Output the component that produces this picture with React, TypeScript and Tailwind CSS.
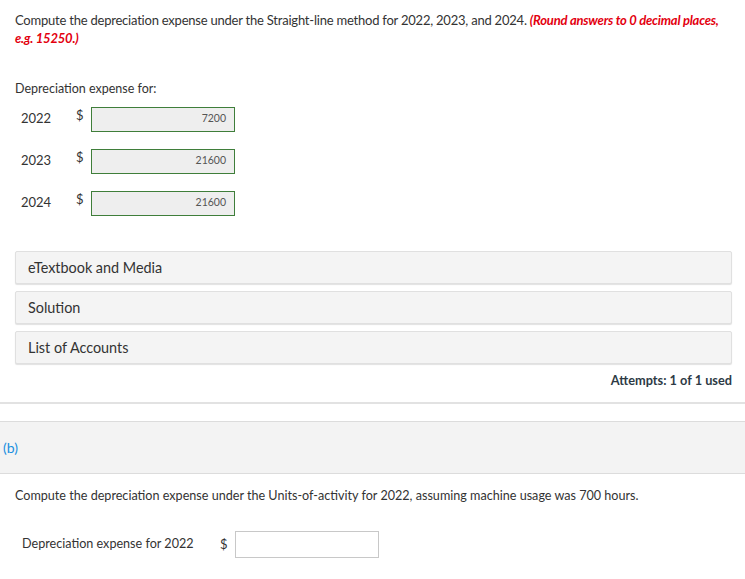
const rows = [
  { year: "2022", value: "7200" },
  { year: "2023", value: "21600" },
  { year: "2024", value: "21600" },
];

const panels = ["eTextbook and Media", "Solution", "List of Accounts"];

export default function App() {
  return (
    <div className="min-h-screen w-[745px] bg-white text-[#333] font-['Lato',sans-serif]">
      <div className="pl-[15px] pr-[13px] pt-[11px]">
        <p className="text-[13px] leading-[18px] tracking-[-0.22px] text-[#333]">
          Compute the depreciation expense under the Straight-line method for 2022, 2023, and 2024.{" "}
          <span className="font-bold italic text-[#e3000f]">(Round answers to 0 decimal places, e.g. 15250.)</span>
        </p>

        <p className="mt-[33px] text-[12.5px] leading-[18px]">Depreciation expense for:</p>

        <div className="mt-[9px] flex flex-col gap-[18px]">
          {rows.map((r) => (
            <div key={r.year} className="flex items-center h-[24px]">
              <span className="w-[61px] pl-[6px] text-[13px]">{r.year}</span>
              <span className="w-[15px] text-[13px] self-start mt-[-1px]">$</span>
              <div className="w-[144px] h-[25px] border border-[#3f7e3a] bg-[#eeeeee] flex items-center justify-end pr-[8px] text-[10.5px] text-[#555]">
                {r.value}
              </div>
            </div>
          ))}
        </div>

        <div className="mt-[36px] flex flex-col gap-[7px]">
          {panels.map((p) => (
            <div
              key={p}
              className="h-[33px] flex items-center px-[12px] bg-[#f4f4f4] border border-[#e0e0e0] rounded-[2px] shadow-[0_1px_1px_rgba(0,0,0,0.12)] text-[14.4px] text-[#333]"
            >
              {p}
            </div>
          ))}
        </div>

        <div className="mt-[7px] flex justify-end text-[12.75px] font-bold text-[#2d3a45]">
          Attempts: 1 of 1 used
        </div>
      </div>

      <div className="mt-[12px] border-t-2 border-[#e2e2e2]" />

      <div className="mt-[17px] h-[53px] bg-[#f3f3f3] border-y border-[#dcdcdc] flex items-center pl-[3px] text-[14px] text-[#1a8fe0]">
        (b)
      </div>

      <div className="px-[15px]">
        <p className="mt-[13px] text-[12.6px] leading-[18px]">
          Compute the depreciation expense under the Units-of-activity for 2022, assuming machine usage was 700 hours.
        </p>

        <div className="mt-[26px] flex items-center">
          <span className="w-[205px] pl-[7px] text-[12.6px]">Depreciation expense for 2022</span>
          <span className="w-[15px] text-[13px]">$</span>
          <div className="w-[144px] h-[27px] border border-[#c8c8c8] bg-white" />
        </div>
      </div>
    </div>
  );
}
